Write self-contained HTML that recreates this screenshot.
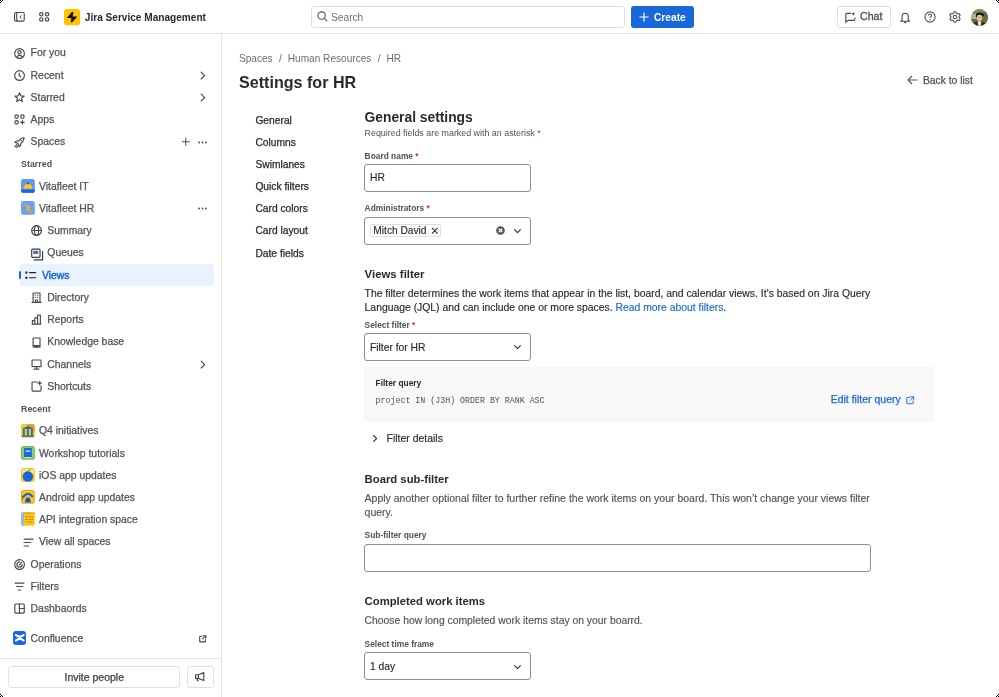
<!DOCTYPE html>
<html><head><meta charset="utf-8">
<style>
*{box-sizing:border-box;margin:0;padding:0}
html,body{width:999px;height:697px;overflow:hidden;background:#fff}
body{font-family:"Liberation Sans",sans-serif;color:#292A2E;position:relative}
.a{position:absolute;white-space:nowrap}
svg{display:block;overflow:visible}
.ico{position:absolute}
.av{width:13.8px;height:13.6px;border-radius:2.5px;overflow:hidden}
.av-it{background:linear-gradient(#5A9BF0 0,#5A9BF0 60%,#1868DB 60%);}
.av-hr{background:#6AA2F2}
.av-q4{background:#F5A524}
.av-ws{background:#6CC04A}
.av-ios{background:#F8D45C}
.av-and{background:#F5A524}
.av-api{background:#6AA2F2}
</style></head><body>
<div id="w" style="position:absolute;left:0;top:0;width:999px;height:697px;will-change:transform"><div class="a" style="left:0.00px;top:0.00px;width:999.00px;height:33.50px;border-bottom:1px solid #E2E3E6"></div>
<div class="a" style="left:0.00px;top:33.00px;width:222.00px;height:664.00px;border-right:1px solid #E2E3E6"></div>
<svg class="ico" style="left:14px;top:12px" width="10.8" height="9.7" viewBox="0 0 10.8 9.7"><rect x="0.55" y="0.55" width="9.7" height="8.6" rx="1.4" fill="none" stroke="#44464C" stroke-width="1.1"/><line x1="2.75" y1="0.8" x2="2.75" y2="8.9" stroke="#44464C" stroke-width="1.1"/><path d="M7.6 3.2 L5.9 4.85 L7.6 6.5" fill="none" stroke="#44464C" stroke-width="1"/></svg>
<svg class="ico" style="left:39px;top:12px" width="10.6" height="9.8" viewBox="0 0 10.6 9.8"><g fill="none" stroke="#44464C" stroke-width="1.15"><circle cx="2.3" cy="2.3" r="1.7"/><circle cx="8.1" cy="2.3" r="1.7"/><circle cx="2.3" cy="7.5" r="1.7"/><circle cx="8.1" cy="7.5" r="1.7"/></g></svg>
<svg class="ico" style="left:64.2px;top:8.5px" width="16.2" height="16.4" viewBox="0 0 16 16"><rect width="16" height="16" rx="3.3" fill="#FFC400"/><path d="M8 2.6 Q8.9 2.6 9.3 3.5 L8.3 8.8 L3 8.9 Q2.8 8.6 3.1 8.2 Z" fill="#101214"/><path d="M7.5 7.3 L12.7 7.3 Q12.9 7.7 12.6 8.1 L7.9 13.3 Q7 13.3 6.7 12.4 Z" fill="#101214"/></svg>
<div class="a" style="left:84.80px;top:13px;font-size:10.1px;line-height:10.1px;color:#292A2E;font-weight:bold;">Jira Service Management</div>
<div class="a" style="left:311.00px;top:6.00px;width:314.00px;height:22.00px;border:1px solid #DDDEE1;border-radius:3px"></div>
<svg class="ico" style="left:317px;top:11px" width="11" height="11" viewBox="0 0 11 11"><circle cx="4.6" cy="4.6" r="3.7" fill="none" stroke="#505258" stroke-width="1.1"/><line x1="7.3" y1="7.3" x2="10.2" y2="10.2" stroke="#505258" stroke-width="1.1"/></svg>
<div class="a" style="left:331.00px;top:13px;font-size:10.2px;line-height:10.2px;color:#6B6E76;">Search</div>
<div class="a" style="left:630.50px;top:6.00px;width:63.50px;height:22.00px;background:#1868DB;border-radius:3px"></div>
<svg class="ico" style="left:639px;top:11.5px" width="10" height="10" viewBox="0 0 10 10"><path d="M5 0.5V9.5M0.5 5H9.5" stroke="#fff" stroke-width="1.2"/></svg>
<div class="a" style="left:654.00px;top:13px;font-size:10.2px;line-height:10.2px;color:#fff;font-weight:bold;">Create</div>
<div class="a" style="left:837.00px;top:6.00px;width:54.00px;height:22.00px;border:1px solid #DDDEE1;border-radius:3px"></div>
<svg class="ico" style="left:845px;top:11.6px" width="11" height="11" viewBox="0 0 11 11"><path d="M6 1.4 H1.9 Q0.8 1.4 0.8 2.5 V10.2 L3.1 8.4 H8.7 Q9.8 8.4 9.8 7.3 V5.4" fill="none" stroke="#44464C" stroke-width="1.1" stroke-linejoin="round"/><path d="M8.3 0 Q8.5 1.7 10.3 1.9 Q8.5 2.1 8.3 3.8 Q8.1 2.1 6.3 1.9 Q8.1 1.7 8.3 0Z" fill="#44464C"/></svg>
<svg class="ico" style="left:899.6px;top:11.6px" width="10.4" height="11" viewBox="0 0 10.4 11"><path d="M2.1 8.3 V5 Q2.1 1.2 5.2 1.2 Q8.3 1.2 8.3 5 V8.3 L9.6 9.3 H0.8 Z" fill="none" stroke="#44464C" stroke-width="1.1" stroke-linejoin="round"/><path d="M4 10.2 Q5.2 11.3 6.4 10.2" fill="none" stroke="#44464C" stroke-width="1.1"/></svg>
<svg class="ico" style="left:924px;top:10.5px" width="12" height="12" viewBox="0 0 12 12"><circle cx="6" cy="6" r="5.1" fill="none" stroke="#505258" stroke-width="1.1"/><path d="M4.4 4.6 Q4.4 3 6 3 Q7.6 3 7.6 4.5 Q7.6 5.4 6.6 5.9 Q6 6.2 6 7" fill="none" stroke="#505258" stroke-width="1.1"/><circle cx="6" cy="8.7" r="0.7" fill="#505258"/></svg>
<svg class="ico" style="left:949px;top:10.5px" width="12" height="12" viewBox="0 0 12 12"><circle cx="6" cy="6" r="1.8" fill="none" stroke="#505258" stroke-width="1.1"/><path d="M5 0.8 H7 L7.4 2.3 L8.7 3 L10.2 2.5 L11.2 4.2 L10.1 5.3 V6.7 L11.2 7.8 L10.2 9.5 L8.7 9 L7.4 9.7 L7 11.2 H5 L4.6 9.7 L3.3 9 L1.8 9.5 L0.8 7.8 L1.9 6.7 V5.3 L0.8 4.2 L1.8 2.5 L3.3 3 L4.6 2.3 Z" fill="none" stroke="#505258" stroke-width="1.1" stroke-linejoin="round"/></svg>
<div class="a" style="left:860.00px;top:11px;font-size:10.6px;line-height:10.6px;color:#505258;-webkit-text-stroke:0.35px #505258;">Chat</div>
<svg class="ico" style="left:971.3px;top:8.6px" width="17" height="17" viewBox="0 0 17 17"><defs><clipPath id="avc"><circle cx="8.5" cy="8.5" r="8.5"/></clipPath></defs><g clip-path="url(#avc)"><rect width="17" height="17" fill="#8A8A5A"/><rect x="0" y="5" width="5" height="6" fill="#A9B2AE"/><rect x="0" y="10" width="17" height="4" fill="#5E7A34"/><rect x="12" y="3" width="5" height="7" fill="#6B6A48"/><path d="M1.5 17 Q2 12.2 8.5 12 Q15 12.2 15.5 17Z" fill="#3B2C20"/><path d="M6.6 12.2 L7.4 17 H9.6 L10.4 12.2Z" fill="#ECEAEE"/><ellipse cx="8.3" cy="8.8" rx="2.7" ry="3.2" fill="#E2C2A8"/><path d="M4.8 7.6 Q4.6 3.2 8.6 3.4 Q12.6 3.2 13 6.2 L12 8 Q11 5.6 8.4 5.8 Q6 5.8 5.6 8.2Z" fill="#1A1614"/><path d="M6.2 8.4 H10.4" stroke="#6A5A50" stroke-width="0.35"/></g></svg>
<div class="a" style="left:19.50px;top:263.70px;width:194.50px;height:22.10px;background:#E9F2FE;border-radius:3px"></div>
<div class="a" style="left:19.00px;top:270.80px;width:2.00px;height:8.00px;background:#1868DB;border-radius:1px"></div>
<svg class="ico" style="left:14.00px;top:47.55px" width="11.1" height="11.1" viewBox="0 0 16 16"><g fill="none" stroke="#46484E" stroke-width="1.65" stroke-linecap="round" stroke-linejoin="round"><circle cx="8" cy="8" r="7"/><circle cx="8" cy="6.2" r="2.4"/><path d="M4.2 13.2 Q5 10.6 8 10.6 Q11 10.6 11.8 13.2"/></g></svg>
<div class="a" style="left:30.60px;top:48px;font-size:10.4px;line-height:10.4px;color:#505258;-webkit-text-stroke:0.25px currentColor;">For you</div>
<svg class="ico" style="left:14.00px;top:69.78px" width="11.1" height="11.1" viewBox="0 0 16 16"><g fill="none" stroke="#46484E" stroke-width="1.65" stroke-linecap="round" stroke-linejoin="round"><circle cx="8" cy="8" r="7"/><path d="M7.5 4.5 V8.3 L9.8 9.8"/></g></svg>
<div class="a" style="left:30.60px;top:71px;font-size:10.4px;line-height:10.4px;color:#505258;-webkit-text-stroke:0.25px currentColor;">Recent</div>
<svg class="ico" style="left:197.00px;top:69.78px" width="11.1" height="11.1" viewBox="0 0 16 16"><g fill="none" stroke="#46484E" stroke-width="1.65" stroke-linecap="round" stroke-linejoin="round"><path d="M6 3 L11 8 L6 13"/></g></svg>
<svg class="ico" style="left:14.00px;top:92.01px" width="11.1" height="11.1" viewBox="0 0 16 16"><g fill="none" stroke="#46484E" stroke-width="1.65" stroke-linecap="round" stroke-linejoin="round"><path d="M8 1.2 L9.9 5.6 L14.7 6 L11 9.1 L12.2 13.9 L8 11.3 L3.8 13.9 L5 9.1 L1.3 6 L6.1 5.6 Z"/></g></svg>
<div class="a" style="left:30.60px;top:93px;font-size:10.4px;line-height:10.4px;color:#505258;-webkit-text-stroke:0.25px currentColor;">Starred</div>
<svg class="ico" style="left:197.00px;top:92.01px" width="11.1" height="11.1" viewBox="0 0 16 16"><g fill="none" stroke="#46484E" stroke-width="1.65" stroke-linecap="round" stroke-linejoin="round"><path d="M6 3 L11 8 L6 13"/></g></svg>
<div class="a" style="left:30.60px;top:115px;font-size:10.4px;line-height:10.4px;color:#505258;-webkit-text-stroke:0.25px currentColor;">Apps</div>
<svg class="ico" style="left:14px;top:114px" width="11" height="11" viewBox="0 0 11 11"><g fill="none" stroke="#46484E" stroke-width="1.15" stroke-linecap="round"><circle cx="2.6" cy="2.6" r="1.75"/><circle cx="8.4" cy="2.6" r="1.75"/><circle cx="2.6" cy="8.3" r="1.75"/><path d="M8.4 6.5 V10.1 M6.6 8.3 H10.2"/></g></svg>
<div class="a" style="left:30.60px;top:137px;font-size:10.4px;line-height:10.4px;color:#505258;-webkit-text-stroke:0.25px currentColor;">Spaces</div>
<svg class="ico" style="left:181.30px;top:137.27px" width="9.5" height="9.5" viewBox="0 0 16 16"><g fill="none" stroke="#46484E" stroke-width="1.65" stroke-linecap="round" stroke-linejoin="round"><path d="M8 2 V14 M2 8 H14"/></g></svg>
<svg class="ico" style="left:196.50px;top:136.52px" width="11" height="11" viewBox="0 0 16 16"><g fill="#46484E"><circle cx="3" cy="8" r="1.3"/><circle cx="8" cy="8" r="1.3"/><circle cx="13" cy="8" r="1.3"/></g></svg>
<svg class="ico" style="left:14px;top:136.6px" width="11" height="11" viewBox="0 0 11 11"><g fill="none" stroke="#46484E" stroke-width="1.15" stroke-linecap="round" stroke-linejoin="round"><path d="M10.1 0.8 Q6.6 0.9 4.6 3.9 L1.9 4.2 L0.9 5.5 L3.3 6.1 L4.6 7.4 L5.2 9.8 L6.5 8.8 L6.9 6.2 Q10 4.3 10.1 0.8 Z"/><path d="M2.9 7.6 L0.8 9.7 M4 8.9 L2.2 10.7"/></g><circle cx="7.3" cy="3.6" r="0.75" fill="#46484E"/></svg>
<div class="a" style="left:21.00px;top:160px;font-size:8.9px;line-height:8.9px;color:#505258;font-weight:bold;">Starred</div>
<svg class="ico" style="left:21px;top:178.98px" width="13.8" height="13.8" viewBox="0 0 14 14"><rect width="14" height="14" rx="2.6" fill="#5C9BF2"/><path d="M0 10.6 H14 V11.4 Q14 14 11.4 14 H2.6 Q0 14 0 11.4Z" fill="#1868DB"/><path d="M2.6 10 Q2.6 5 7 5 Q11.4 5 11.4 10 Z" fill="#FFC716"/><rect x="6" y="3.6" width="2" height="1.6" fill="#5A4A1A"/><path d="M10.3 4.5 L12 6" stroke="#3A6FC0" stroke-width="0.7"/></svg>
<div class="a" style="left:39.00px;top:182px;font-size:10.4px;line-height:10.4px;color:#505258;-webkit-text-stroke:0.25px currentColor;">Vitafleet IT</div>
<svg class="ico" style="left:21px;top:201.21px" width="13.8" height="13.8" viewBox="0 0 14 14"><rect width="14" height="14" rx="2.6" fill="#6AA2F2"/><path d="M0 0 L14 14" stroke="#8DB8F6" stroke-width="0.6"/><path d="M4.2 2.6 L9.6 7 L7.3 7.6 L10.8 12.2 L4.8 8.4 L7.1 7.7 Z" fill="#FFC716" stroke="#F59A16" stroke-width="0.7" stroke-linejoin="round"/></svg>
<div class="a" style="left:39.00px;top:204px;font-size:10.4px;line-height:10.4px;color:#505258;-webkit-text-stroke:0.25px currentColor;">Vitafleet HR</div>
<svg class="ico" style="left:196.50px;top:203.21px" width="11" height="11" viewBox="0 0 16 16"><g fill="#46484E"><circle cx="3" cy="8" r="1.3"/><circle cx="8" cy="8" r="1.3"/><circle cx="13" cy="8" r="1.3"/></g></svg>
<svg class="ico" style="left:30.50px;top:225.39px" width="11.1" height="11.1" viewBox="0 0 16 16"><g fill="none" stroke="#46484E" stroke-width="1.65" stroke-linecap="round" stroke-linejoin="round"><circle cx="8" cy="8" r="7"/><ellipse cx="8" cy="8" rx="3" ry="7"/><path d="M1 8 H15"/></g></svg>
<div class="a" style="left:47.30px;top:226px;font-size:10.4px;line-height:10.4px;color:#505258;-webkit-text-stroke:0.25px currentColor;">Summary</div>
<svg class="ico" style="left:30.50px;top:247.62px" width="11.1" height="11.1" viewBox="0 0 16 16"><g fill="none" stroke="#46484E" stroke-width="1.65" stroke-linecap="round" stroke-linejoin="round"><rect x="1" y="1.6" width="12" height="12" rx="1.2" stroke="#2C3E5D" stroke-width="1.7"/><path d="M16.7 4.5 V17.2 H4" stroke="#2C3E5D" stroke-width="1.7" stroke-linecap="butt"/><rect x="3.2" y="4" width="7.2" height="4.6" fill="#2C3E5D" opacity="0.75" stroke="none"/></g></svg>
<div class="a" style="left:47.30px;top:248px;font-size:10.4px;line-height:10.4px;color:#505258;-webkit-text-stroke:0.25px currentColor;">Queues</div>
<svg class="ico" style="left:25.00px;top:270.25px" width="11.1" height="11.1" viewBox="0 0 16 16"><g fill="none" stroke="#46484E" stroke-width="1.65" stroke-linecap="round" stroke-linejoin="round"><circle cx="2" cy="3.7" r="0.9" fill="#292A2E" stroke="#292A2E"/><circle cx="2" cy="11.2" r="0.9" fill="#292A2E" stroke="#292A2E"/><path d="M6.5 3.7 H15.5 M6.5 11.2 H15.5" stroke="#292A2E"/></g></svg>
<div class="a" style="left:42.00px;top:271px;font-size:10.4px;line-height:10.4px;color:#1868DB;-webkit-text-stroke:0.45px currentColor;">Views</div>
<svg class="ico" style="left:30.50px;top:292.08px" width="11.1" height="11.1" viewBox="0 0 16 16"><g fill="none" stroke="#46484E" stroke-width="1.65" stroke-linecap="round" stroke-linejoin="round"><path d="M3 15 V1.5 H13 V15 M1.5 15 H14.5 M6.5 15 V11.5 H9.5 V15"/><path d="M6 4.5 H6.5 M9.5 4.5 H10 M6 7.5 H6.5 M9.5 7.5 H10"/></g></svg>
<div class="a" style="left:47.30px;top:293px;font-size:10.4px;line-height:10.4px;color:#505258;-webkit-text-stroke:0.25px currentColor;">Directory</div>
<svg class="ico" style="left:30.50px;top:314.31px" width="11.1" height="11.1" viewBox="0 0 16 16"><g fill="none" stroke="#46484E" stroke-width="1.65" stroke-linecap="round" stroke-linejoin="round"><path d="M1.5 14.5 H14.5 M2 14.5 V9.5 H5.5 V14.5 M5.5 14.5 V5.5 H9.5 V14.5 M9.5 14.5 V1.5 H13.5 V14.5"/></g></svg>
<div class="a" style="left:47.30px;top:315px;font-size:10.4px;line-height:10.4px;color:#505258;-webkit-text-stroke:0.25px currentColor;">Reports</div>
<svg class="ico" style="left:30.50px;top:336.54px" width="11.1" height="11.1" viewBox="0 0 16 16"><g fill="none" stroke="#46484E" stroke-width="1.65" stroke-linecap="round" stroke-linejoin="round"><path d="M3 12.5 V2.5 Q3 1.5 4 1.5 H13 V12.5 H4 Q3 12.5 3 13.5 Q3 14.5 4 14.5 H13 V12.5"/><circle cx="8" cy="13.5" r="1" fill="#46484E"/></g></svg>
<div class="a" style="left:47.30px;top:337px;font-size:10.4px;line-height:10.4px;color:#505258;-webkit-text-stroke:0.25px currentColor;">Knowledge base</div>
<svg class="ico" style="left:30.50px;top:358.77px" width="11.1" height="11.1" viewBox="0 0 16 16"><g fill="none" stroke="#46484E" stroke-width="1.65" stroke-linecap="round" stroke-linejoin="round"><rect x="1.5" y="1.5" width="13" height="9.5" rx="1"/><path d="M8 11 V14.5 M4.5 14.5 H11.5"/></g></svg>
<div class="a" style="left:47.30px;top:360px;font-size:10.4px;line-height:10.4px;color:#505258;-webkit-text-stroke:0.25px currentColor;">Channels</div>
<svg class="ico" style="left:197.00px;top:358.77px" width="11.1" height="11.1" viewBox="0 0 16 16"><g fill="none" stroke="#46484E" stroke-width="1.65" stroke-linecap="round" stroke-linejoin="round"><path d="M6 3 L11 8 L6 13"/></g></svg>
<svg class="ico" style="left:30.50px;top:381.00px" width="11.1" height="11.1" viewBox="0 0 16 16"><g fill="none" stroke="#46484E" stroke-width="1.65" stroke-linecap="round" stroke-linejoin="round"><path d="M9 1.5 H2.5 Q1.5 1.5 1.5 2.5 V13.5 Q1.5 14.5 2.5 14.5 H13.5 Q14.5 14.5 14.5 13.5 V7"/><path d="M12.5 0.5 V5.5 M10 3 H15"/></g></svg>
<div class="a" style="left:47.30px;top:382px;font-size:10.4px;line-height:10.4px;color:#505258;-webkit-text-stroke:0.25px currentColor;">Shortcuts</div>
<div class="a" style="left:21.00px;top:405px;font-size:8.9px;line-height:8.9px;color:#505258;font-weight:bold;">Recent</div>
<svg class="ico" style="left:21px;top:423.51px" width="13.8" height="13.8" viewBox="0 0 14 14"><rect width="14" height="14" rx="2.6" fill="#FFC716"/><path d="M7 0 H11.4 Q14 0 14 2.6 V8 L7 4Z" fill="#F59A16"/><path d="M1.2 5 L7 1.8 L12.8 5 Z" fill="#1868DB"/><rect x="2" y="5.2" width="1.8" height="6.6" fill="#1868DB"/><rect x="6.1" y="5.2" width="1.8" height="6.6" fill="#1868DB"/><rect x="10.2" y="5.2" width="1.8" height="6.6" fill="#1868DB"/><rect x="1" y="11.6" width="12" height="1.4" fill="#1868DB"/></svg>
<div class="a" style="left:39.00px;top:426px;font-size:10.4px;line-height:10.4px;color:#505258;-webkit-text-stroke:0.25px currentColor;">Q4 initiatives</div>
<svg class="ico" style="left:21px;top:445.74px" width="13.8" height="13.8" viewBox="0 0 14 14"><rect width="14" height="14" rx="2.6" fill="#6CC04A"/><rect x="1.2" y="1.2" width="11.6" height="11.6" rx="1.5" fill="#8FD06A"/><rect x="3" y="2" width="8" height="10" rx="0.8" fill="#1868DB"/><rect x="4.5" y="4.5" width="5" height="1.3" fill="#CFE1FD"/><rect x="3.5" y="11.2" width="7" height="0.8" fill="#fff"/></svg>
<div class="a" style="left:39.00px;top:449px;font-size:10.4px;line-height:10.4px;color:#505258;-webkit-text-stroke:0.25px currentColor;">Workshop tutorials</div>
<svg class="ico" style="left:21px;top:467.97px" width="13.8" height="13.8" viewBox="0 0 14 14"><rect width="14" height="14" rx="2.6" fill="#FFC716"/><rect x="1" y="1" width="12" height="5" rx="1.8" fill="#FBE08A"/><circle cx="7" cy="8.6" r="5.3" fill="#1868DB"/><path d="M5.5 4.2 Q7 3.4 8.5 4.2" stroke="#0B3F8F" stroke-width="0.7" fill="none"/><path d="M7.2 3.8 L9.8 1" stroke="#6CC04A" stroke-width="1.4"/></svg>
<div class="a" style="left:39.00px;top:471px;font-size:10.4px;line-height:10.4px;color:#505258;-webkit-text-stroke:0.25px currentColor;">iOS app updates</div>
<svg class="ico" style="left:21px;top:490.20px" width="13.8" height="13.8" viewBox="0 0 14 14"><rect width="14" height="14" rx="2.6" fill="#F5A524"/><rect x="1" y="1" width="12" height="12" rx="2" fill="#FFC716"/><path d="M2.6 6.6 Q7 1.2 11.6 6.6" fill="none" stroke="#1868DB" stroke-width="2.1" stroke-linecap="round"/><path d="M3.6 12.8 L5.2 7.6 H8.8 L10.4 12.8 Z" fill="#1868DB"/><circle cx="7" cy="10.2" r="1.4" fill="#0B3F8F"/><path d="M0.8 6 Q2.8 7 1.6 9.6" stroke="#5A3A10" stroke-width="0.8" fill="none"/></svg>
<div class="a" style="left:39.00px;top:493px;font-size:10.4px;line-height:10.4px;color:#505258;-webkit-text-stroke:0.25px currentColor;">Android app updates</div>
<svg class="ico" style="left:21px;top:512.43px" width="13.8" height="13.8" viewBox="0 0 14 14"><rect width="14" height="14" rx="2.6" fill="#FFC716"/><path d="M2.6 0 H3 V14 H2.6 Q0 14 0 11.4 V2.6 Q0 0 2.6 0Z" fill="#8FB8F6"/><rect x="3" y="0" width="11" height="2.4" fill="#F5B82E"/><path d="M4.5 1.2 H9" stroke="#A06E00" stroke-width="0.6" stroke-dasharray="0.8 0.6"/><path d="M4.5 5 H12.8 M4.5 7.6 H7.5 M8.5 7.6 H12.8 M4.5 10.2 H6 M7.5 10.2 H12.5" stroke="#A06E00" stroke-width="0.8" stroke-dasharray="1.6 0.5"/></svg>
<div class="a" style="left:39.00px;top:515px;font-size:10.4px;line-height:10.4px;color:#505258;-webkit-text-stroke:0.25px currentColor;">API integration space</div>
<svg class="ico" style="left:22.50px;top:536.61px" width="11.1" height="11.1" viewBox="0 0 16 16"><g fill="none" stroke="#46484E" stroke-width="1.65" stroke-linecap="round" stroke-linejoin="round"><path d="M1.5 3 H14.5 M1.5 8 H11 M1.5 13 H8"/></g></svg>
<div class="a" style="left:39.00px;top:537px;font-size:10.4px;line-height:10.4px;color:#505258;-webkit-text-stroke:0.25px currentColor;">View all spaces</div>
<svg class="ico" style="left:14.00px;top:558.84px" width="11.1" height="11.1" viewBox="0 0 16 16"><g fill="none" stroke="#46484E" stroke-width="1.65" stroke-linecap="round" stroke-linejoin="round"><path d="M8 1 A7 7 0 1 0 15 8" /><path d="M15 8 A7 7 0 0 0 8 1" stroke-dasharray="1.6 1.6"/><path d="M8 4.2 A3.8 3.8 0 1 0 11.8 8"/><circle cx="8" cy="8" r="0.9" fill="#46484E" stroke="none"/><path d="M8 8 L11.2 4.8"/></g></svg>
<div class="a" style="left:30.60px;top:560px;font-size:10.4px;line-height:10.4px;color:#505258;-webkit-text-stroke:0.25px currentColor;">Operations</div>
<svg class="ico" style="left:14.00px;top:581.07px" width="11.1" height="11.1" viewBox="0 0 16 16"><g fill="none" stroke="#46484E" stroke-width="1.65" stroke-linecap="round" stroke-linejoin="round"><path d="M1.5 3 H14.5 M3.8 8 H12.2 M6 13 H10"/></g></svg>
<div class="a" style="left:30.60px;top:582px;font-size:10.4px;line-height:10.4px;color:#505258;-webkit-text-stroke:0.25px currentColor;">Filters</div>
<svg class="ico" style="left:14.00px;top:603.30px" width="11.1" height="11.1" viewBox="0 0 16 16"><g fill="none" stroke="#46484E" stroke-width="1.65" stroke-linecap="round" stroke-linejoin="round"><rect x="1.2" y="1.5" width="13.6" height="13" rx="1.5"/><path d="M7.8 1.5 V14.5 M7.8 8 H14.8"/></g></svg>
<div class="a" style="left:30.60px;top:604px;font-size:10.4px;line-height:10.4px;color:#505258;-webkit-text-stroke:0.25px currentColor;">Dashbaords</div>
<div class="a" style="left:12.50px;top:631.00px;width:13.50px;height:13.50px;background:#1868DB;border-radius:3px"></div>
<svg class="ico" style="left:12.5px;top:631px" width="13.5" height="13.5" viewBox="0 0 14 14"><path d="M3 4.2 Q7 7.6 11 4.2 M3 9.8 Q7 6.4 11 9.8" fill="none" stroke="#fff" stroke-width="2.2" stroke-linecap="round"/></svg>
<div class="a" style="left:30.60px;top:634px;font-size:10.4px;line-height:10.4px;color:#505258;-webkit-text-stroke:0.25px currentColor;">Confluence</div>
<svg class="ico" style="left:198.80px;top:634.70px" width="7.6" height="7.6" viewBox="0 0 16 16"><g fill="none" stroke="#46484E" stroke-width="2.3" stroke-linecap="round" stroke-linejoin="round"><path d="M9 1.5 H14.5 V7 M14.5 1.5 L8 8 M6.5 2.5 H2.5 Q1.5 2.5 1.5 3.5 V13.5 Q1.5 14.5 2.5 14.5 H12.5 Q13.5 14.5 13.5 13.5 V9.5"/></g></svg>
<div class="a" style="left:0.00px;top:657.90px;width:222.00px;height:1.00px;background:#E2E3E6"></div>
<div class="a" style="left:8.40px;top:666.20px;width:172.00px;height:22.20px;border:1px solid #DFE0E3;border-radius:3px"></div>
<div class="a" style="left:64.50px;top:672px;font-size:10.5px;line-height:10.5px;color:#3B3D42;-webkit-text-stroke:0.25px currentColor;">Invite people</div>
<div class="a" style="left:186.60px;top:666.20px;width:27.40px;height:22.20px;border:1px solid #DFE0E3;border-radius:3px"></div>
<svg class="ico" style="left:195px;top:672.4px" width="10" height="9.4" viewBox="0 0 10 9.4"><path d="M0.6 2.8 H3.4 L8.8 0.6 V8.6 L3.4 6.4 H0.6 Z" fill="none" stroke="#46484E" stroke-width="1.15" stroke-linejoin="round"/><path d="M3.4 2.8 V6.4" stroke="#46484E" stroke-width="1.15"/><path d="M2.2 6.6 L2.6 8.8 H3.6" fill="none" stroke="#46484E" stroke-width="1.15" stroke-linejoin="round"/></svg>
<div class="a" style="left:239.00px;top:54px;font-size:10.1px;line-height:10.1px;color:#6B6E76;">Spaces<span style="margin:0 5.9px 0 6.4px">/</span>Human Resources<span style="margin:0 5.9px 0 6.4px">/</span>HR</div>
<div class="a" style="left:239.00px;top:74px;font-size:16.1px;line-height:16.1px;color:#292A2E;font-weight:bold;">Settings for HR</div>
<svg class="ico" style="left:907px;top:75px" width="11" height="10" viewBox="0 0 11 10"><path d="M5 1 L1 5 L5 9 M1 5 H10.5" fill="none" stroke="#505258" stroke-width="1.1"/></svg>
<div class="a" style="left:923.00px;top:76px;font-size:10.3px;line-height:10.3px;color:#505258;-webkit-text-stroke:0.25px currentColor;">Back to list</div>
<div class="a" style="left:255.40px;top:116px;font-size:10.25px;line-height:10.25px;color:#292A2E;-webkit-text-stroke:0.25px currentColor;">General</div>
<div class="a" style="left:255.40px;top:138px;font-size:10.25px;line-height:10.25px;color:#292A2E;-webkit-text-stroke:0.25px currentColor;">Columns</div>
<div class="a" style="left:255.40px;top:160px;font-size:10.25px;line-height:10.25px;color:#292A2E;-webkit-text-stroke:0.25px currentColor;">Swimlanes</div>
<div class="a" style="left:255.40px;top:182px;font-size:10.25px;line-height:10.25px;color:#292A2E;-webkit-text-stroke:0.25px currentColor;">Quick filters</div>
<div class="a" style="left:255.40px;top:204px;font-size:10.25px;line-height:10.25px;color:#292A2E;-webkit-text-stroke:0.25px currentColor;">Card colors</div>
<div class="a" style="left:255.40px;top:226px;font-size:10.25px;line-height:10.25px;color:#292A2E;-webkit-text-stroke:0.25px currentColor;">Card layout</div>
<div class="a" style="left:255.40px;top:249px;font-size:10.25px;line-height:10.25px;color:#292A2E;-webkit-text-stroke:0.25px currentColor;">Date fields</div>
<div class="a" style="left:364.60px;top:111px;font-size:13.8px;line-height:13.8px;color:#292A2E;font-weight:bold;">General settings</div>
<div class="a" style="left:364.60px;top:129px;font-size:8.9px;line-height:8.9px;color:#505258;">Required fields are marked with an asterisk <span style="color:#C9372C">*</span></div>
<div class="a" style="left:364.60px;top:152px;font-size:8.4px;line-height:8.4px;color:#505258;font-weight:bold;">Board name <span style="color:#C9372C">*</span></div>
<div class="a" style="left:364.30px;top:164.00px;width:166.50px;height:28.00px;border:1px solid #8C8F97;border-radius:3px"></div>
<div class="a" style="left:370.00px;top:173px;font-size:10.3px;line-height:10.3px;color:#292A2E;-webkit-text-stroke:0.15px currentColor;">HR</div>
<div class="a" style="left:364.60px;top:204px;font-size:8.4px;line-height:8.4px;color:#505258;font-weight:bold;">Administrators <span style="color:#C9372C">*</span></div>
<div class="a" style="left:364.30px;top:217.00px;width:166.50px;height:28.00px;border:1px solid #8C8F97;border-radius:3px"></div>
<div class="a" style="left:369.60px;top:223.70px;width:71.40px;height:13.60px;border:1px solid #DDDEE1;border-radius:2px"></div>
<div class="a" style="left:373.30px;top:226px;font-size:10.2px;line-height:10.2px;color:#292A2E;-webkit-text-stroke:0.15px currentColor;">Mitch David</div>
<svg class="ico" style="left:430.5px;top:226.5px" width="7.5" height="7.5" viewBox="0 0 8 8"><path d="M1 1 L7 7 M7 1 L1 7" stroke="#292A2E" stroke-width="1.1"/></svg>
<svg class="ico" style="left:496px;top:226px" width="9" height="9" viewBox="0 0 9 9"><circle cx="4.5" cy="4.5" r="4.3" fill="#505258"/><path d="M2.7 2.7 L6.3 6.3 M6.3 2.7 L2.7 6.3" stroke="#fff" stroke-width="1.3"/></svg>
<svg class="ico" style="left:513.6px;top:229px" width="7" height="4.5" viewBox="0 0 7 4.5"><path d="M0.6 0.6 L3.5 3.6 L6.4 0.6" fill="none" stroke="#292A2E" stroke-width="1.1" stroke-linecap="round" stroke-linejoin="round"/></svg>
<div class="a" style="left:364.60px;top:269px;font-size:11.4px;line-height:11.4px;color:#292A2E;font-weight:bold;">Views filter</div>
<div class="a" style="left:364.60px;top:289px;font-size:10.38px;line-height:10.38px;color:#292A2E;-webkit-text-stroke:0.15px currentColor;">The filter determines the work items that appear in the list, board, and calendar views. It’s based on Jira Query</div>
<div class="a" style="left:364.60px;top:303px;font-size:10.38px;line-height:10.38px;color:#292A2E;-webkit-text-stroke:0.15px currentColor;">Language (JQL) and can include one or more spaces. <span style="color:#1868DB">Read more about filters</span>.</div>
<div class="a" style="left:364.60px;top:321px;font-size:8.4px;line-height:8.4px;color:#505258;font-weight:bold;">Select filter <span style="color:#C9372C">*</span></div>
<div class="a" style="left:364.30px;top:333.00px;width:166.50px;height:28.00px;border:1px solid #8C8F97;border-radius:3px"></div>
<div class="a" style="left:370.00px;top:343px;font-size:10.3px;line-height:10.3px;color:#292A2E;-webkit-text-stroke:0.15px currentColor;">Filter for HR</div>
<svg class="ico" style="left:513.5px;top:345.2px" width="7" height="4.5" viewBox="0 0 7 4.5"><path d="M0.6 0.6 L3.5 3.6 L6.4 0.6" fill="none" stroke="#292A2E" stroke-width="1.1" stroke-linecap="round" stroke-linejoin="round"/></svg>
<div class="a" style="left:364.00px;top:366.60px;width:570.00px;height:55.00px;background:#F8F8F8;border-radius:1.5px"></div>
<div class="a" style="left:375.60px;top:379px;font-size:8.4px;line-height:8.4px;color:#292A2E;font-weight:bold;">Filter query</div>
<div class="a" style="left:375.60px;top:397px;font-size:8.29px;line-height:8.29px;color:#505258;font-family:'Liberation Mono',monospace;">project IN (J3H) ORDER BY RANK ASC</div>
<div class="a" style="left:830.70px;top:394px;font-size:10.5px;line-height:10.5px;color:#1868DB;-webkit-text-stroke:0.25px currentColor;">Edit filter query</div>
<svg class="ico" style="left:906px;top:396px" width="8.5" height="8.5" viewBox="0 0 16 16"><path d="M9 1.5 H14.5 V7 M14.5 1.5 L8 8 M6.5 2.5 H2.5 Q1.5 2.5 1.5 3.5 V13.5 Q1.5 14.5 2.5 14.5 H12.5 Q13.5 14.5 13.5 13.5 V9.5" fill="none" stroke="#1868DB" stroke-width="1.8" stroke-linecap="round" stroke-linejoin="round"/></svg>
<svg class="ico" style="left:373.3px;top:435.1px" width="4.5" height="7" viewBox="0 0 4.5 7"><path d="M0.6 0.6 L3.6 3.5 L0.6 6.4" fill="none" stroke="#292A2E" stroke-width="1.1" stroke-linecap="round" stroke-linejoin="round"/></svg>
<div class="a" style="left:386.60px;top:434px;font-size:10.45px;line-height:10.45px;color:#292A2E;-webkit-text-stroke:0.15px currentColor;">Filter details</div>
<div class="a" style="left:364.60px;top:474px;font-size:11.3px;line-height:11.3px;color:#292A2E;font-weight:bold;">Board sub-filter</div>
<div class="a" style="left:364.60px;top:493px;font-size:10.5px;line-height:10.5px;color:#505258;-webkit-text-stroke:0.15px currentColor;">Apply another optional filter to further refine the work items on your board. This won’t change your views filter</div>
<div class="a" style="left:364.60px;top:507px;font-size:10.5px;line-height:10.5px;color:#505258;-webkit-text-stroke:0.15px currentColor;">query.</div>
<div class="a" style="left:364.60px;top:531px;font-size:8.4px;line-height:8.4px;color:#505258;font-weight:bold;">Sub-filter query</div>
<div class="a" style="left:364.30px;top:544.40px;width:507.00px;height:28.00px;border:1px solid #8C8F97;border-radius:3px"></div>
<div class="a" style="left:364.60px;top:596px;font-size:11.3px;line-height:11.3px;color:#292A2E;font-weight:bold;">Completed work items</div>
<div class="a" style="left:364.60px;top:616px;font-size:10.37px;line-height:10.37px;color:#505258;-webkit-text-stroke:0.15px currentColor;">Choose how long completed work items stay on your boarrd.</div>
<div class="a" style="left:364.60px;top:640px;font-size:8.4px;line-height:8.4px;color:#505258;font-weight:bold;">Select time frame</div>
<div class="a" style="left:364.30px;top:652.40px;width:166.50px;height:28.00px;border:1px solid #8C8F97;border-radius:3px"></div>
<div class="a" style="left:370.00px;top:662px;font-size:10.3px;line-height:10.3px;color:#292A2E;-webkit-text-stroke:0.15px currentColor;">1 day</div>
<svg class="ico" style="left:513.5px;top:664.5px" width="7" height="4.5" viewBox="0 0 7 4.5"><path d="M0.6 0.6 L3.5 3.6 L6.4 0.6" fill="none" stroke="#292A2E" stroke-width="1.1" stroke-linecap="round" stroke-linejoin="round"/></svg>
<div class="a" style="left:0px;top:0px;width:1px;height:1px;background:#000"></div>
<div class="a" style="left:2px;top:0px;width:1px;height:1px;background:#000"></div>
<div class="a" style="left:1px;top:1px;width:1px;height:1px;background:#000"></div>
<div class="a" style="left:0px;top:2px;width:1px;height:1px;background:#000"></div>
<div class="a" style="left:996px;top:0px;width:1px;height:1px;background:#000"></div>
<div class="a" style="left:998px;top:0px;width:1px;height:1px;background:#000"></div>
<div class="a" style="left:997px;top:1px;width:1px;height:1px;background:#000"></div>
<div class="a" style="left:998px;top:2px;width:1px;height:1px;background:#000"></div>
<div class="a" style="left:0px;top:694px;width:1px;height:1px;background:#000"></div>
<div class="a" style="left:1px;top:695px;width:1px;height:1px;background:#000"></div>
<div class="a" style="left:0px;top:696px;width:1px;height:1px;background:#000"></div>
<div class="a" style="left:2px;top:696px;width:1px;height:1px;background:#000"></div>
<div class="a" style="left:998px;top:694px;width:1px;height:1px;background:#000"></div>
<div class="a" style="left:997px;top:695px;width:1px;height:1px;background:#000"></div>
<div class="a" style="left:996px;top:696px;width:1px;height:1px;background:#000"></div>
<div class="a" style="left:998px;top:696px;width:1px;height:1px;background:#000"></div>
</div></body></html>
